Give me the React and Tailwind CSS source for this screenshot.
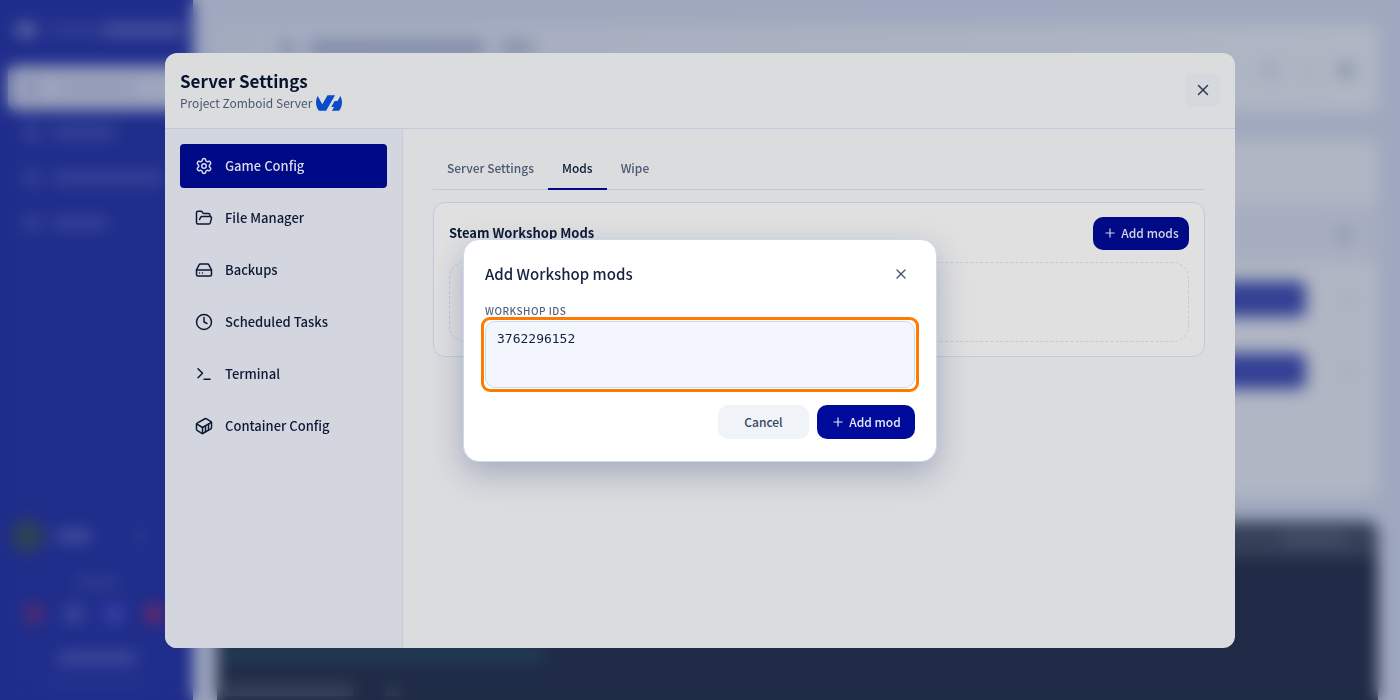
import React, { useState } from 'react';
import { Settings, FolderOpen, HardDrive, Clock, Terminal, Container, X, Plus } from 'lucide-react';

const menu = [
  { label: 'Game Config', icon: Settings },
  { label: 'File Manager', icon: FolderOpen },
  { label: 'Backups', icon: HardDrive },
  { label: 'Scheduled Tasks', icon: Clock },
  { label: 'Terminal', icon: Terminal },
  { label: 'Container Config', icon: Container },
];

const tabs = ['Server Settings', 'Mods', 'Wipe'];

function OvhLogo() {
  return (
    <svg viewBox="0 4.85 24 14.3" className="w-[26px] h-4" fill="#0a4cc8">
      <path d="M19.881 10.095l2.563-4.45C23.434 7.389 24 9.404 24 11.555c0 2.88-1.017 5.523-2.71 7.594h-6.62l2.04-3.541h-2.696l3.176-5.513h2.691zm-2.32-5.243L9.333 19.14l.003.009H2.709C1.014 17.077 0 14.435 0 11.555c0-2.152.57-4.17 1.561-5.918L5.855 13.1l4.756-8.248h6.95z" />
    </svg>
  );
}

// Page behind the modal, only seen through the backdrop blur
function Dashboard() {
  return (
    <div className="flex h-screen bg-[#9fa8be] overflow-hidden" aria-hidden="true">
      <aside className="w-[193px] shrink-0 bg-[#1f2d8b] px-2 flex flex-col">
        <div className="h-[66px] pt-6 pl-2 flex gap-3">
          <div className="w-5 h-3 rounded bg-[#6a74ae]" />
          <div className="w-14 h-3 rounded bg-[#333f95]" />
          <div className="w-20 h-3 -ml-3 rounded bg-[#4d589f]" />
        </div>
        <div className="h-11 rounded-lg bg-[#9ea5bd] flex items-center gap-4 px-4">
          <div className="w-4 h-4 rounded bg-[#868eb4]" />
          <div className="w-20 h-3 rounded bg-[#9199b8]" />
        </div>
        {['w-16', 'w-28', 'w-14'].map((w) => (
          <div key={w} className="h-[45px] flex items-center gap-3 px-4">
            <div className="w-4 h-4 rounded bg-[#39459a]" />
            <div className={`${w} h-3 rounded bg-[#3a469a]`} />
          </div>
        ))}
        <div className="mt-auto flex items-center gap-3 px-1">
          <div className="w-8 h-8 rounded-full bg-[#2d4450]" />
          <div className="w-9 h-3 rounded bg-[#46529f]" />
          <div className="w-3 h-3 ml-8 rounded bg-[#303d94]" />
        </div>
        <div className="mt-6 mx-auto w-11 h-3 rounded bg-[#303d90]" />
        <div className="mt-4 flex gap-5 px-4">
          <div className="w-5 h-5 shrink-0 rounded-full bg-[#5b2c6c]" />
          <div className="w-5 h-5 shrink-0 rounded-full bg-[#404b9d]" />
          <div className="w-5 h-5 shrink-0 rounded-full bg-[#3b40ad]" />
          <div className="w-5 h-5 shrink-0 rounded-full bg-[#712865]" />
        </div>
        <div className="mt-7 mx-auto w-20 h-3 rounded bg-[#414d9d]" />
        <div className="mt-4 mb-3 mx-auto w-24 h-2 rounded bg-[#28358f]" />
      </aside>
      <main className="flex-1 pl-6 pr-[22px] pt-6 flex flex-col">
        <div className="h-[88px] shrink-0 rounded-lg bg-linear-to-r from-[#a3acbf] to-[#b0b6c3] pt-4 px-6 flex justify-between">
          <div className="flex gap-4 pl-10">
            <div className="w-3 h-4 rounded bg-[#7d88a8]" />
            <div className="w-44 h-4 rounded bg-[#7f8aa8]" />
            <div className="w-8 h-4 rounded bg-[#8691ac]" />
          </div>
          <div className="flex gap-6 items-center pb-3">
            <div className="w-4 h-3 rounded bg-[#98a3b8]" />
            <div className="w-3 h-3 rounded bg-[#a3acbd]" />
            <div className="w-4 h-4 rounded bg-[#8a96ae]" />
          </div>
        </div>
        <div className="mt-7 h-[357px] shrink-0 rounded-lg bg-[#b0b6c3] pt-16 flex flex-col">
          <div className="h-[59px] bg-[#a7aec0] flex items-center justify-end px-7">
            <div className="w-3 h-3 rounded bg-[#8290aa]" />
          </div>
          {[1, 2].map((n) => (
            <div key={n} className="h-[72px] flex items-center justify-end gap-10 px-6">
              <div className="w-48 h-9 rounded-lg bg-[#334094]" />
              <div className="w-2 h-3 rounded bg-[#9da7bb]" />
            </div>
          ))}
        </div>
        <div className="mt-6 flex-1 rounded-t-xl bg-[#1f2b46] flex flex-col justify-between overflow-hidden">
          <div className="h-9 bg-[#344158] flex items-center justify-end px-8">
            <div className="w-16 h-3 rounded bg-[#455066]" />
          </div>
          <div>
            <div className="h-3 w-80 ml-2 bg-[#21405b]" />
            <div className="mt-6 mb-1 ml-2 flex gap-8">
              <div className="h-3 w-32 bg-[#3b465c]" />
              <div className="h-3 w-4 bg-[#303c56]" />
            </div>
          </div>
        </div>
      </main>
    </div>
  );
}

function AddModDialog({ onClose }) {
  const [ids, setIds] = useState('3762296152');

  return (
    <div className="fixed inset-0 flex items-center justify-center">
      <div role="dialog" aria-labelledby="add-title" className="w-[474px] rounded-2xl border border-[#cdd9ee] bg-white px-[21px] pt-[19px] pb-[22px] shadow-[0_12px_32px_rgba(30,45,110,0.28)]">
        <div className="flex items-center justify-between h-[30px]">
          <h3 id="add-title" className="text-[15px] leading-6 font-medium text-[#14213f]">Add Workshop mods</h3>
          <button type="button" aria-label="Close" onClick={onClose} className="w-7 h-7 flex items-center justify-center text-[#475572]">
            <X className="w-4 h-4" strokeWidth={2} />
          </button>
        </div>
        <label htmlFor="workshop-ids" className="block mt-[14px] text-[10px] leading-4 font-medium tracking-wider text-[#55627d]">WORKSHOP IDS</label>
        <div className="mt-[2px] rounded-[5px] outline-[3px] outline-offset-1 outline-[#ff7a00]">
          <textarea
            id="workshop-ids"
            value={ids}
            onChange={(e) => setIds(e.target.value)}
            className="block w-full h-[67px] px-[11px] py-[7px] resize-none rounded-[10px] border border-[#cdd9ea] bg-[#f3f6fd] font-['DejaVu_Sans_Mono',monospace] text-[13px] leading-5 text-[#14213f] outline-none"
          />
        </div>
        <div className="mt-[17px] flex justify-end gap-2">
          <button type="button" onClick={onClose} className="h-[34px] w-[91px] rounded-[10px] bg-[#f0f4f9] text-[12px] font-medium text-[#37445f]">Cancel</button>
          <button type="button" className="h-[34px] w-[98px] rounded-[10px] bg-[#000a9b] flex items-center justify-center gap-1 text-[12px] font-medium text-[#e6e8fa]">
            <Plus className="w-[14px] h-[14px]" strokeWidth={2} />
            Add mod
          </button>
        </div>
      </div>
    </div>
  );
}

export default function App() {
  const [tab, setTab] = useState('Mods');
  const [adding, setAdding] = useState(true);

  return (
    <div className="font-['Noto_Sans_CJK_SC',sans-serif]">
      <Dashboard />

      <div className="fixed inset-0 flex items-center justify-center backdrop-blur-sm">
        <div className="w-full max-w-[1070px] h-[85vh] flex flex-col rounded-xl bg-[#dbdcde] overflow-hidden">
          <header className="h-[76px] shrink-0 px-[15px] flex items-center justify-between border-b border-[#bfcbdd]">
            <div className="pt-px">
              <h1 className="text-[17px] leading-6 font-bold text-[#06132e]">Server Settings</h1>
              <div className="flex items-center gap-1 text-[12px] leading-5 text-[#4b5873]">
                Project Zomboid Server
                <OvhLogo />
              </div>
            </div>
            <button type="button" aria-label="Close settings" className="w-[35px] h-[34px] rounded-md bg-[#d5d9dd] flex items-center justify-center text-[#2c3955]">
              <X className="w-[18px] h-[18px]" strokeWidth={2} />
            </button>
          </header>

          <div className="flex flex-1 min-h-0">
            <nav className="w-[238px] shrink-0 p-[15px] flex flex-col gap-2 bg-[#d3d6df] border-r border-[#c3cedc]">
              {menu.map(({ label, icon: Icon }, i) => (
                <button
                  key={label}
                  type="button"
                  className={`h-11 shrink-0 px-[15px] flex items-center gap-3 rounded text-[13px] font-medium ${i === 0 ? 'bg-[#000a87] text-[#d9dbe8]' : 'text-[#0c1935]'}`}
                >
                  <Icon className="w-[18px] h-[18px]" />
                  {label}
                </button>
              ))}
            </nav>

            <section className="flex-1 min-w-0 px-[30px] pt-[19px]">
              <div className="flex border-b border-[#bfcad9]">
                {tabs.map((t) => (
                  <button
                    key={t}
                    type="button"
                    onClick={() => setTab(t)}
                    className={`h-[42px] px-[14px] -mb-px border-b-2 text-[12px] font-medium ${tab === t ? 'border-[#000a87] text-[#0c1935]' : 'border-transparent text-[#4b5873]'}`}
                  >
                    {t}
                  </button>
                ))}
              </div>

              <div className="mt-3 px-[15px] py-[14px] rounded-xl border border-[#bfcbdd] bg-[#e0e0e0]">
                <div className="flex items-start justify-between">
                  <h2 className="pt-1 text-[13px] leading-6 font-bold text-[#0c1935]">Steam Workshop Mods</h2>
                  <button type="button" onClick={() => setAdding(true)} className="h-[33px] w-24 rounded-[10px] bg-[#000a87] flex items-center justify-center gap-1 text-[12px] font-medium text-[#d3d6e6]">
                    <Plus className="w-[14px] h-[14px]" strokeWidth={2} />
                    Add mods
                  </button>
                </div>
                <div className="mt-3 h-20 rounded-2xl border border-dashed border-[#bfcbdd]" />
              </div>
            </section>
          </div>
        </div>
      </div>

      {adding && <AddModDialog onClose={() => setAdding(false)} />}
    </div>
  );
}
